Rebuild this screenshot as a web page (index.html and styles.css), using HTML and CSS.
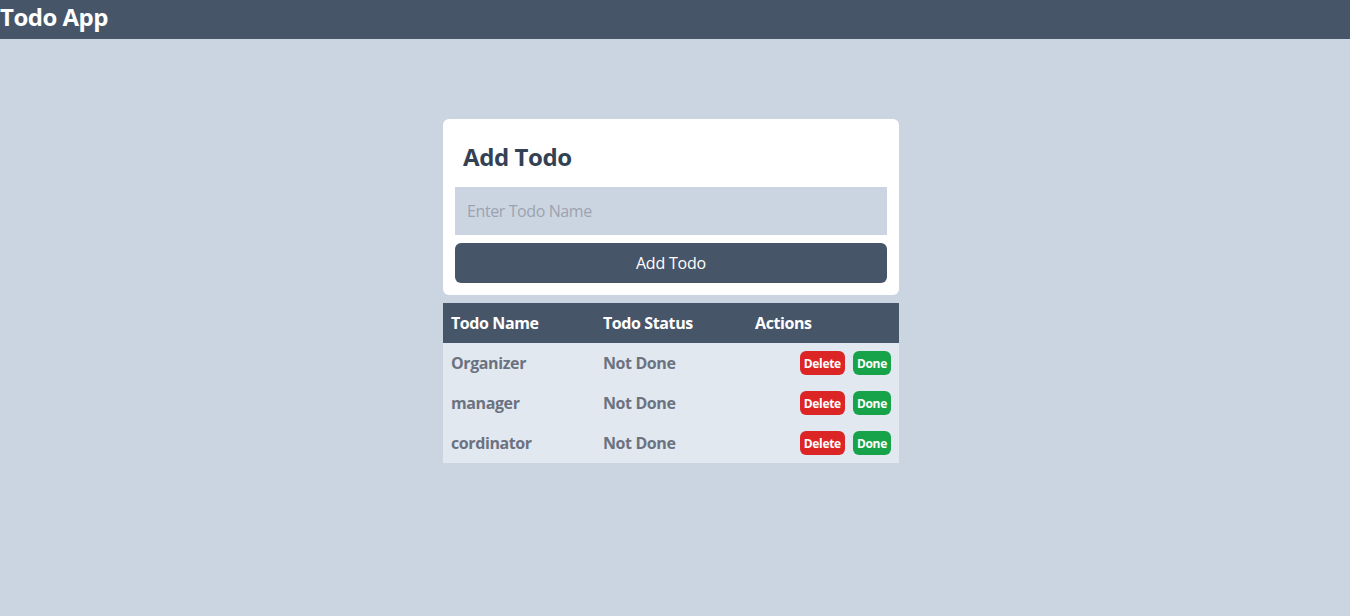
FILE: index.html
```html
<!DOCTYPE html>
<html>
<head>
<meta charset="utf-8">
<link rel="stylesheet" href="styles.css">
</head>
<body>
<header class="topbar"><h1 class="brand">Todo App</h1></header>
<main class="main">
  <div class="wrap">
    <section class="card">
      <h2 class="card-title">Add Todo</h2>
      <input class="input" type="text" placeholder="Enter Todo Name">
      <button class="add-btn">Add Todo</button>
    </section>
    <table class="table">
      <thead>
        <tr class="head-row"><th>Todo Name</th><th>Todo Status</th><th>Actions</th></tr>
      </thead>
      <tbody>
        <tr><td>Organizer</td><td>Not Done</td><td class="actions"><button class="btn del">Delete</button><button class="btn done">Done</button></td></tr>
        <tr><td>manager</td><td>Not Done</td><td class="actions"><button class="btn del">Delete</button><button class="btn done">Done</button></td></tr>
        <tr><td>cordinator</td><td>Not Done</td><td class="actions"><button class="btn del">Delete</button><button class="btn done">Done</button></td></tr>
      </tbody>
    </table>
  </div>
</main>
</body>
</html>
```
FILE: styles.css
```css
* { box-sizing: border-box; }
html, body { margin: 0; padding: 0; }
body {
  background: #cbd5e1;
  font-family: "Open Sans", "Noto Sans", sans-serif;
  min-height: 616px;
}
.topbar {
  background: #475569;
  height: 39px;
  display: flex;
  align-items: flex-start;
}
.brand {
  margin: 0;
  color: #fff;
  font-size: 24px;
  line-height: 34px;
  font-weight: 700;
  letter-spacing: -0.5px;
}
.main {
  display: flex;
  justify-content: center;
  padding-top: 80px;
  padding-right: 8px;
}
.wrap {
  width: 456px;
  display: flex;
  flex-direction: column;
  gap: 8px;
}
.card {
  background: #fff;
  border-radius: 6px;
  padding: 12px;
  display: flex;
  flex-direction: column;
}
.card-title {
  margin: 0 0 8px;
  padding: 10px 8px 6px;
  color: #334155;
  font-size: 24px;
  line-height: 32px;
  font-weight: 700;
  letter-spacing: -0.4px;
}
.input {
  height: 48px;
  border: none;
  outline: none;
  background: #cbd5e1;
  padding: 0 12px;
  font-family: inherit;
  font-size: 16px;
  letter-spacing: -0.4px;
  color: #334155;
}
.input::placeholder { color: #9ca3af; }
.add-btn {
  margin-top: 8px;
  height: 40px;
  border: none;
  border-radius: 6px;
  background: #475569;
  color: #fff;
  font-family: inherit;
  font-size: 16px;
  letter-spacing: -0.2px;
}
.table {
  width: 100%;
  border-collapse: collapse;
  table-layout: fixed;
  background: #e2e8f0;
}
.table th, .table td {
  height: 40px;
  padding: 0 8px;
  text-align: left;
  font-size: 16px;
  font-weight: 700;
  letter-spacing: -0.4px;
}
.head-row { background: #475569; }
.table th { color: #fff; }
.table td { color: #6b7280; }
.table td.actions {
  text-align: right;
  white-space: nowrap;
}
.btn {
  height: 24px;
  border: none;
  border-radius: 6px;
  color: #fff;
  font-family: inherit;
  font-size: 12px;
  font-weight: 700;
  letter-spacing: -0.3px;
  padding: 0 4px;
  vertical-align: middle;
}
.btn + .btn { margin-left: 8px; }
.del { background: #dc2626; }
.done { background: #16a34a; }
```
